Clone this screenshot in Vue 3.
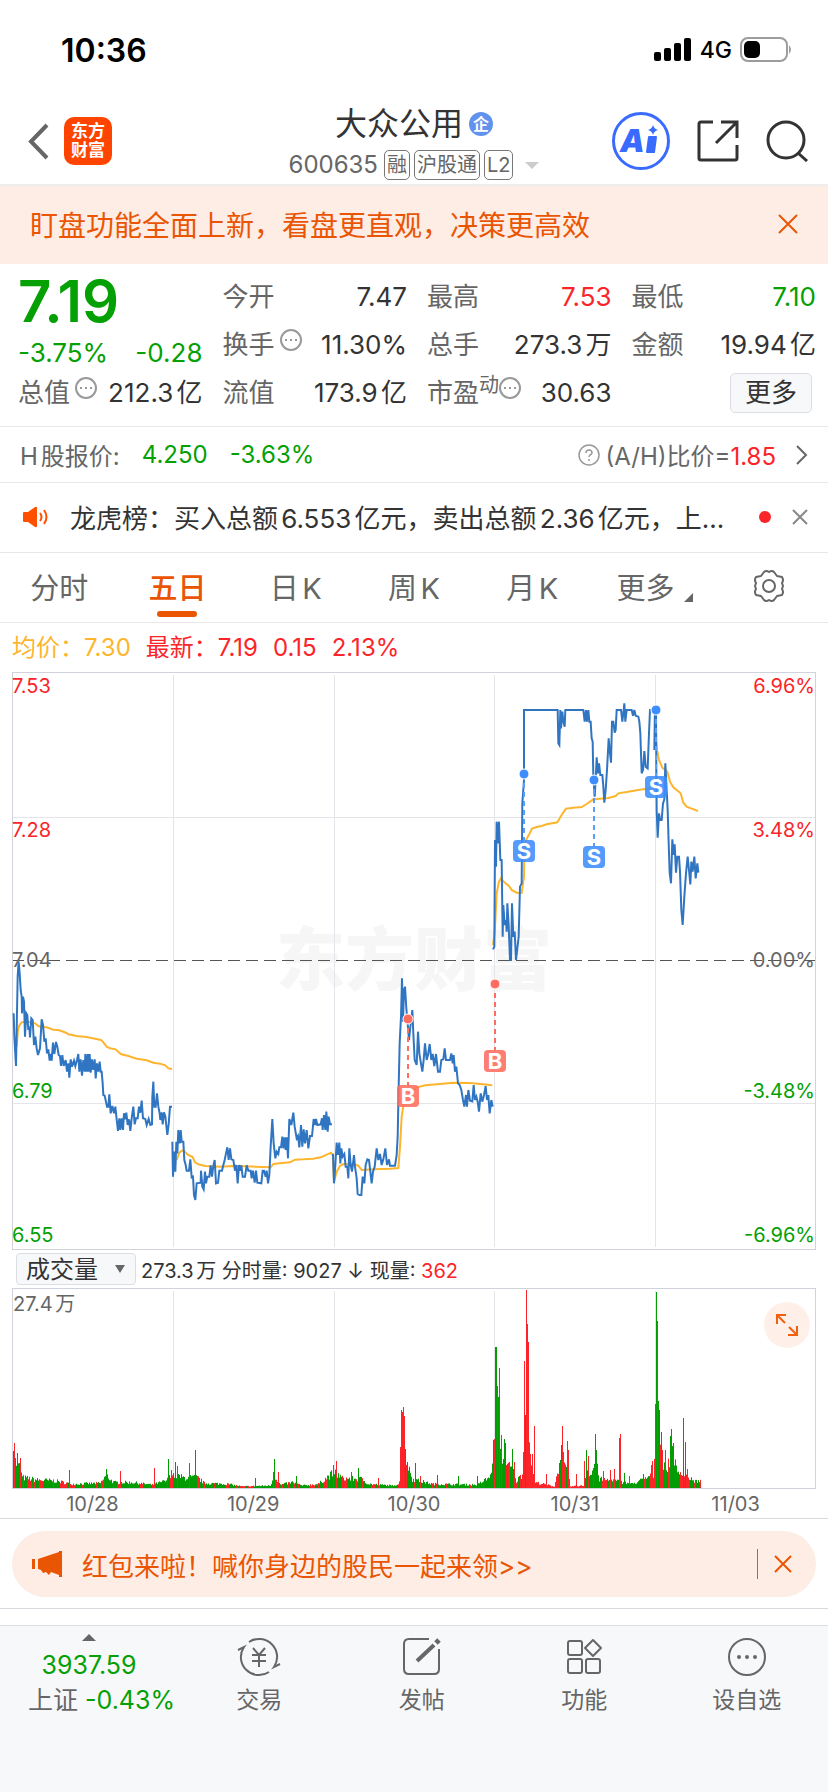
<template>
  <div class="page">
    <div class="status-bar">
      <span class="time">10:36</span>
      <div class="status-icons">
        <svg width="38" height="24" viewBox="0 0 38 24">
          <rect x="0" y="14" width="7" height="9" rx="2" />
          <rect x="10" y="10" width="7" height="13" rx="2" />
          <rect x="20" y="5" width="7" height="18" rx="2" />
          <rect x="30" y="0" width="7" height="23" rx="2" />
        </svg>
        <span class="network">4G</span>
        <svg width="52" height="26" viewBox="0 0 52 26">
          <rect x="1" y="1" width="46" height="23" rx="7" fill="none" stroke="#9c9c9c" stroke-width="2" />
          <rect x="4" y="4" width="16" height="17" rx="5" />
          <path d="M49 8q4 4.500 0 9z" fill="#9c9c9c" />
        </svg>
      </div>
    </div>

    <header class="header">
      <div class="header-left">
        <button class="icon-btn" aria-label="返回">
          <svg width="22" height="38" viewBox="0 0 22 38" fill="none" stroke="#666" stroke-width="4">
            <path d="M19 3 3 19.500 19 36" />
          </svg>
        </button>
        <div class="logo"><span>东方</span><span>财富</span></div>
      </div>
      <div class="header-title">
        <h1>大众公用<span class="corp">企</span></h1>
        <div class="code-row">
          <span class="code">600635</span>
          <span v-for="tag in tags" :key="tag" class="tag">{{ tag }}</span>
          <i class="caret"></i>
        </div>
      </div>
      <div class="header-right">
        <button class="icon-btn" aria-label="Ai">
          <svg width="58" height="58" viewBox="0 0 58 58">
            <circle cx="29" cy="29" r="27.500" fill="none" stroke="#3a6bff" stroke-width="3" />
            <text x="8" y="40" class="ai-text">A</text>
            <path d="M37 25h7l-2 15h-7z" fill="#3a6bff" stroke="#3a6bff" stroke-width="2" stroke-linejoin="round" />
            <path d="M41 13q1 4 5 5-4 1-5 5-1-4-5-5 4-1 5-5z" fill="#3a6bff" />
          </svg>
        </button>
        <button class="icon-btn" aria-label="分享">
          <svg width="42" height="42" viewBox="0 0 42 42" fill="none" stroke="#333" stroke-width="3">
            <path d="M16 2H4Q2 2 2 4V38Q2 40 4 40H38Q40 40 40 38V25M24 2H40V18M40 2 19 23" />
          </svg>
        </button>
        <button class="icon-btn" aria-label="搜索">
          <svg width="42" height="42" viewBox="0 0 42 42" fill="none" stroke="#333" stroke-width="3">
            <circle cx="20" cy="20" r="18" />
            <path d="M32 33 41 41" />
          </svg>
        </button>
      </div>
    </header>

    <div class="banner">
      <span>盯盘功能全面上新，看盘更直观，决策更高效</span>
      <button class="icon-btn" aria-label="关闭">
        <svg width="20" height="20" viewBox="0 0 20 20" stroke="#ea5504" stroke-width="2"><path d="M1 1 19 19M19 1 1 19" /></svg>
      </button>
    </div>

    <section class="quote">
      <div class="quote-col">
        <div class="price">7.19</div>
        <div class="change"><span>-3.75%</span><span>-0.28</span></div>
        <div class="cell">
          <span class="label">总值</span>
          <svg class="dots" viewBox="0 0 22 22"><circle cx="11" cy="11" r="10" /><path d="M5 11h2M10 11h2M15 11h2" /></svg>
          <span class="value">212.3亿</span>
        </div>
      </div>
      <div v-for="(col, c) in quoteCols" :key="c" class="quote-col">
        <div v-for="item in col" :key="item.label" class="cell">
          <span class="label">{{ item.label }}</span>
          <span v-if="item.sup" class="sup">{{ item.sup }}</span>
          <svg v-if="item.info" class="dots" viewBox="0 0 22 22"><circle cx="11" cy="11" r="10" /><path d="M5 11h2M10 11h2M15 11h2" /></svg>
          <span class="value" :class="item.tone">{{ item.value }}</span>
        </div>
        <div v-if="c === 2" class="cell"><button class="more-btn">更多</button></div>
      </div>
    </section>

    <section class="h-share">
      <span class="h-label">H股报价:</span>
      <span class="down">4.250</span>
      <span class="down">-3.63%</span>
      <a href="#" class="ratio">
        <svg width="22" height="22" viewBox="0 0 22 22" fill="none" stroke="#999" stroke-width="1.500">
          <circle cx="11" cy="11" r="10" />
          <path d="M8 9q0-3 3-3t3 3q0 1-2 2-1 1-1 2M11 15v2" />
        </svg>
        <span>(A/H)比价=<b class="up">1.85</b></span>
        <svg class="chevron" width="12" height="20" viewBox="0 0 12 20" fill="none" stroke="#666" stroke-width="2"><path d="M1 1 10 10 1 19" /></svg>
      </a>
    </section>

    <section class="notice">
      <svg width="26" height="22" viewBox="0 0 26 22" fill="none" stroke="#ff5000" stroke-width="2">
        <path d="M1 7Q1 6 2 6H6L13 1Q15 0 15 2V20Q15 22 13 21L6 16H2Q1 16 1 15z" fill="#ff5000" stroke="none" />
        <path d="M18 7q3 4 0 8M22 4q5 7 0 14" />
      </svg>
      <p>龙虎榜：买入总额6.553亿元，卖出总额2.36亿元，上...</p>
      <i class="red-dot"></i>
      <button class="icon-btn" aria-label="关闭">
        <svg width="16" height="16" viewBox="0 0 16 16" stroke="#888" stroke-width="2"><path d="M1 1 15 15M15 1 1 15" /></svg>
      </button>
    </section>

    <nav class="tabs">
      <button
        v-for="tab in tabs"
        :key="tab"
        class="tab"
        :class="{ active: tab === activeTab }"
        @click="activeTab = tab"
      >{{ tab }}<i v-if="tab === '更多'" class="corner"></i></button>
      <button class="tab" aria-label="设置">
        <svg width="34" height="34" viewBox="0 0 34 34" fill="none" stroke="#666" stroke-width="2">
          <path d="M12 3Q14 1 17 3 20 1 22 3L25 7 30 8Q32 11 30 14L31 17 30 20Q32 23 30 26L25 27 22 31Q20 33 17 31 14 33 12 31L9 27 4 26Q2 23 4 20L3 17 4 14Q2 11 4 8L9 7z" stroke-linejoin="round" />
          <circle cx="17" cy="17" r="6" />
        </svg>
      </button>
    </nav>

    <div class="legend">
      <span class="avg">均价：7.30</span>
      <span class="up">最新：7.19</span>
      <span class="up">0.15</span>
      <span class="up">2.13%</span>
    </div>

    <div class="charts">
      <svg class="chart" viewBox="0 0 804 578">
        <text class="watermark" x="402" y="313">东方财富</text>
        <path class="grid" d="M161 3V575M322 3V575M482 3V575M643 3V575M0 145H804M0 431H804" />
        <path class="base" d="M0 288H804" />
        <rect x="0" y="0" width="804" height="578" fill="none" stroke="#d0d3dc" stroke-width="2" />
        <g v-for="(t, i) in axis" :key="i" class="axis" :class="t.tone">
          <text x="0" :y="t.y">{{ t.price }}</text>
          <text x="803" :y="t.y" text-anchor="end">{{ t.pct }}</text>
        </g>
        <g transform="scale(0.333333)" fill="none">
          <g v-for="(s, i) in sessions" :key="i" :transform="`translate(${s.x} ${s.y})`">
            <polyline :points="s.avg" stroke="#fdb52e" stroke-width="6" />
            <polyline :points="s.price" stroke="#3075c2" stroke-width="6" />
          </g>
        </g>
        <g v-for="(m, i) in marks" :key="'m' + i" :class="m.type === 'S' ? 'sell' : 'buy'">
          <path :d="`M${m.x} ${m.y}v66`" stroke-width="2" stroke-dasharray="5 4" />
          <circle :cx="m.x" :cy="m.y" r="5" stroke="#fff" />
          <rect :x="m.x - 11" :y="m.y + 66" width="22" height="22" rx="4" />
          <text :x="m.x" :y="m.y + 85">{{ m.type }}</text>
        </g>
      </svg>

      <div class="volume-bar">
        <div class="select-wrap">
          <select aria-label="指标">
            <option>成交量</option>
            <option>MACD</option>
          </select>
        </div>
        <span>273.3万 分时量: 9027 ↓ 现量: <b class="up">362</b></span>
      </div>

      <div class="volume">
        <svg class="chart" viewBox="0 0 804 201">
          <path class="grid" d="M161 3V200M322 3V200M482 3V200M643 3V200" />
          <rect x="0" y="0" width="804" height="201" fill="none" stroke="#d0d3dc" stroke-width="2" />
          <path :d="volume.r" stroke="#fb2529" />
          <path :d="volume.g" stroke="#049c04" />
          <text x="1" y="23" class="axis flat">27.4万</text>
        </svg>
        <button class="expand" aria-label="全屏">
          <svg width="24" height="24" viewBox="0 0 24 24" fill="none" stroke="#f0600f" stroke-width="2">
            <path d="M2 11V2H11M2 2 10 10M22 13V22H13M22 22 14 14" />
          </svg>
        </button>
      </div>
      <div class="dates"><span v-for="d in dates" :key="d">{{ d }}</span></div>
    </div>

    <div class="promo-wrap">
      <div class="promo">
        <svg width="30" height="26" viewBox="0 0 30 26" fill="#ea5504">
          <path d="M0 8H3V18H0zM6 8 27 1V0H30V26H27V24L19 21 17 24 14 21 11 22 9 19 6 18z" />
        </svg>
        <a href="#">红包来啦！喊你身边的股民一起来领&gt;&gt;</a>
        <button class="icon-btn promo-close" aria-label="关闭">
          <svg width="18" height="18" viewBox="0 0 18 18" stroke="#ea5504" stroke-width="2"><path d="M1 1 17 17M17 1 1 17" /></svg>
        </button>
      </div>
    </div>

    <footer class="bottom">
      <a href="#" class="index">
        <i class="up-caret"></i>
        <span class="down">3937.59</span>
        <span class="index-name">上证 <b class="down">-0.43%</b></span>
      </a>
      <a href="#" class="nav-item">
        <svg width="44" height="40" viewBox="0 0 44 40">
          <path d="M12 5A18 18 0 0 1 37 30L43 27M32 35A18 18 0 0 1 7 10L1 13" />
          <path d="M16 11 22 18 28 11M15 18H29M15 24H29M22 18V30" />
        </svg>
        <span>交易</span>
      </a>
      <a href="#" class="nav-item">
        <svg width="40" height="40" viewBox="0 0 40 40">
          <path d="M27 2H7Q2 2 2 7V32Q2 37 7 37H32Q37 37 37 32V12" />
          <path d="M15 24 32 8" stroke-width="4" />
          <path d="M34 6 37 3" stroke-width="5" />
        </svg>
        <span>发帖</span>
      </a>
      <a href="#" class="nav-item">
        <svg width="40" height="40" viewBox="0 0 40 40">
          <rect x="4" y="4" width="14" height="14" rx="2" />
          <rect x="4" y="22" width="14" height="14" rx="2" />
          <rect x="22" y="22" width="14" height="14" rx="2" />
          <path d="M29 3 37 11 29 19 21 11z" stroke-linejoin="round" />
        </svg>
        <span>功能</span>
      </a>
      <a href="#" class="nav-item">
        <svg width="40" height="40" viewBox="0 0 40 40">
          <circle cx="20" cy="20" r="18" />
          <path d="M12 20h0M20 20h0M28 20h0" stroke-width="4" stroke-linecap="round" />
        </svg>
        <span>设自选</span>
      </a>
    </footer>
  </div>
</template>

<script setup>
import { ref } from 'vue'

const tags = ['融', '沪股通', 'L2']
const tabs = ['分时', '五日', '日K', '周K', '月K', '更多']
const activeTab = ref('五日')
const dates = ['10/28', '10/29', '10/30', '10/31', '11/03']

const quoteCols = [
  [
    { label: '今开', value: '7.47' },
    { label: '换手', value: '11.30%', info: true },
    { label: '流值', value: '173.9亿' },
  ],
  [
    { label: '最高', value: '7.53', tone: 'up' },
    { label: '总手', value: '273.3万' },
    { label: '市盈', sup: '动', value: '30.63', info: true },
  ],
  [
    { label: '最低', value: '7.10', tone: 'down' },
    { label: '金额', value: '19.94亿' },
  ],
]

const axis = [
  { price: '7.53', pct: '6.96%', y: 21, tone: 'high' },
  { price: '7.28', pct: '3.48%', y: 165, tone: 'high' },
  { price: '7.04', pct: '0.00%', y: 295, tone: 'flat' },
  { price: '6.79', pct: '-3.48%', y: 426, tone: 'low' },
  { price: '6.55', pct: '-6.96%', y: 570, tone: 'low' },
]

// one entry per trading day, points are in thirds of a chart unit
const sessions = [
  {
    x: -36, y: 774,
    avg: '50,350 54,300 58,286 65,277 75,275 95,277 105,280 115,288 122,290 140,292 160,299 175,300 200,309 205,313 230,318 260,321 285,326 303,330 310,337 320,350 330,355 347,358 362,372 385,378 410,386 440,391 460,398 480,401 496,406 505,415 516,417',
    price: '41,250 43,320 48,408 50,300 53,140 56,95 59,130 62,180 65,200 66,250 69,200 72,215 75,320 79,250 82,255 85,300 88,290 90,322 94,265 98,270 102,345 106,320 110,355 114,375 120,355 125,268 129,285 133,335 137,325 141,370 145,358 149,392 153,372 155,392 159,338 163,372 168,336 172,350 176,375 180,378 183,408 187,375 191,408 197,390 201,425 205,400 208,443 212,388 216,410 222,392 226,408 231,390 235,372 238,425 242,388 246,437 250,390 254,425 256,372 260,425 263,372 266,425 269,372 272,428 276,388 280,420 284,388 287,445 291,400 295,425 299,395 302,425 305,425 308,460 310,495 314,497 318,515 321,530 325,530 328,493 332,550 337,528 342,550 346,530 350,568 354,603 358,565 361,600 365,565 369,600 372,550 376,568 379,548 383,585 387,568 391,603 395,565 400,530 404,583 408,565 413,565 417,530 421,548 425,512 429,565 436,567 440,585 446,567 451,585 456,583 457,500 460,455 463,530 467,530 471,490 475,530 479,550 481,570 485,547 488,583 492,547 496,560 502,615 506,583 510,530 516,530',
  },
  {
    x: -36, y: 774,
    avg: '530,690 538,668 545,662 552,662 562,673 578,681 585,697 595,703 615,708 660,710 700,708 740,709 790,711 812,712 820,702 840,700 870,697 885,689 910,688 940,686 965,681 980,674 996,667',
    price: '517,635 519,740 523,665 526,725 529,635 532,670 535,600 539,640 542,600 545,635 550,635 553,690 557,705 560,722 567,722 571,688 575,742 579,740 582,795 586,810 590,760 602,758 603,722 607,770 611,778 615,725 618,760 622,740 628,740 632,706 636,740 640,708 644,690 648,760 654,758 658,722 666,722 670,705 674,690 678,670 682,652 686,690 690,655 694,688 700,690 705,722 709,705 713,760 717,705 721,722 724,706 728,740 735,740 740,706 745,722 752,722 755,745 759,722 764,758 768,722 772,758 784,760 788,722 792,722 797,740 800,722 804,760 808,735 812,650 817,567 821,640 826,685 830,665 835,672 838,652 843,652 847,620 850,655 854,622 857,660 860,622 864,685 868,567 874,585 880,548 884,590 890,625 894,618 898,652 903,585 907,650 911,598 915,640 920,600 925,655 930,618 936,618 941,567 945,585 948,567 952,585 962,583 966,565 968,600 972,555 976,600 979,545 983,605 986,560 990,583 996,583',
  },
  {
    x: 954, y: 684,
    avg: '0,760 8,762 12,845 20,815 30,798 40,792 70,793 85,797 95,810 130,808 180,806 205,804 210,740 215,650 222,605 232,590 245,575 262,562 285,556 330,552 370,548 420,549 460,553 487,556',
    price: '9,762 12,850 16,795 20,728 24,765 28,728 31,790 34,745 38,770 43,762 47,800 52,800 55,835 58,745 62,795 66,815 69,790 72,765 75,800 80,835 83,882 88,885 94,885 98,830 103,850 107,795 112,778 117,780 121,815 125,850 129,815 134,800 140,745 145,780 150,762 155,795 160,778 166,745 171,795 177,778 180,797 195,797 200,765 203,710 206,560 209,430 213,350 216,235 219,365 222,270 225,260 229,325 233,370 237,420 240,390 244,355 247,330 250,400 254,480 260,495 264,395 268,460 272,485 277,515 281,480 285,430 290,480 294,465 299,432 304,480 308,462 313,498 318,462 324,515 330,515 334,480 340,478 344,445 348,480 360,480 364,460 368,490 371,465 375,515 379,500 384,550 389,555 394,570 399,600 403,620 408,585 411,620 415,570 420,602 427,604 431,555 435,600 439,590 443,605 447,635 452,580 457,605 462,585 467,558 471,600 475,585 479,640 484,600 488,620',
  },
  {
    x: 1374, y: -6,
    avg: '69,825 74,790 80,670 87,635 93,625 103,637 117,648 125,660 140,668 155,669 162,620 163,540 168,510 178,492 186,476 200,471 215,468 230,463 262,457 270,443 278,430 288,416 310,413 335,411 350,402 370,388 390,386 415,384 437,378 445,370 470,366 500,361 520,358 545,356',
    price: '69,838 73,830 75,510 78,590 80,455 83,520 87,455 91,570 95,570 98,800 100,705 104,765 108,750 110,785 112,700 116,765 120,870 123,870 126,700 130,800 134,785 138,870 142,835 146,800 150,650 155,640 157,400 162,330 162,120 263,120 265,220 268,225 271,120 273,175 277,125 280,155 284,170 286,120 340,120 344,155 348,120 351,155 355,120 358,155 362,155 365,205 368,215 370,320 374,380 377,330 380,262 384,310 387,280 391,315 397,315 400,350 403,398 407,360 411,300 416,205 419,240 423,278 426,155 430,155 434,188 437,180 440,120 453,120 457,155 460,130 463,100 466,155 470,120 485,120 489,137 493,120 497,137 505,140 508,155 511,190 515,310 519,300 523,243 527,290 533,295 537,190 540,120 543,120',
  },
  {
    x: 1374, y: -6,
    avg: '556,180 561,240 567,270 577,293 592,305 600,335 610,352 632,370 640,398 650,410 665,416 684,423',
    price: '553,240 555,110 558,110 559,300 560,420 563,503 567,430 570,450 575,450 579,400 583,388 586,280 589,340 593,420 596,520 599,608 603,640 607,508 611,555 614,523 618,608 622,560 627,560 630,605 634,720 638,765 643,680 648,610 653,560 657,600 661,643 664,575 668,605 673,560 677,625 682,580 685,608',
  },
]

const marks = [
  { type: 'B', x: 396, y: 347 },
  { type: 'B', x: 483, y: 312 },
  { type: 'S', x: 512, y: 102 },
  { type: 'S', x: 582, y: 108 },
  { type: 'S', x: 644, y: 38 },
]

// typical volume level along the axis, and the bars that stand out of it
const levels = [
  [1, 36], [7, 26], [10, 13], [25, 10], [42, 9], [60, 5], [88, 6], [94, 16], [101, 7], [120, 7], [140, 4], [154, 9],
  [160, 17], [170, 13], [185, 13], [192, 6], [215, 5], [230, 2], [258, 3], [262, 16], [268, 4], [280, 7], [290, 3], [306, 5],
  [322, 20], [330, 12], [350, 11], [356, 5], [380, 3], [386, 5], [394, 36], [400, 11], [420, 5], [465, 4], [478, 14], [483, 70],
  [490, 40], [496, 25], [502, 22], [504, 8], [510, 18], [514, 80], [519, 34], [523, 7], [542, 2], [547, 30], [555, 22],
  [558, 2], [571, 3], [575, 22], [579, 16], [583, 36], [587, 11], [602, 9], [620, 5], [633, 12], [641, 16], [644, 110],
  [649, 45], [652, 27], [656, 28], [660, 45], [665, 17], [670, 22], [674, 17], [680, 9], [688, 8],
]
const peaks = [
  [2, 45, 'r'], [1, 37, 'g'], [5, 35, 'g'], [8, 30, 'r'], [57, 18, 'r'], [94, 19, 'g'], [108, 17, 'r'], [142, 20, 'r'],
  [156, 29, 'g'], [159, 18, 'r'], [163, 26, 'g'], [165, 22, 'r'], [177, 25, 'r'], [183, 38, 'g'], [243, 10, 'g'], [261, 16, 'r'],
  [262, 29, 'g'], [266, 16, 'r'], [284, 12, 'g'], [321, 23, 'r'], [324, 27, 'r'], [339, 16, 'r'], [346, 20, 'g'], [366, 10, 'r'],
  [388, 41, 'r'], [389, 78, 'r'], [390, 76, 'r'], [391, 81, 'r'], [392, 72, 'r'], [393, 39, 'g'], [395, 26, 'g'], [403, 25, 'g'],
  [408, 12, 'r'], [425, 13, 'g'], [446, 12, 'g'], [465, 12, 'g'], [482, 49, 'r'], [483, 141, 'g'], [484, 141, 'g'], [485, 102, 'r'],
  [486, 91, 'g'], [487, 120, 'r'], [488, 39, 'g'], [489, 53, 'r'], [492, 49, 'g'], [493, 45, 'g'], [497, 26, 'r'], [500, 39, 'g'],
  [502, 26, 'r'], [511, 36, 'r'], [512, 127, 'r'], [513, 73, 'g'], [514, 198, 'r'], [515, 164, 'r'], [516, 146, 'r'],
  [518, 34, 'r'], [520, 34, 'r'], [522, 62, 'r'], [534, 14, 'r'], [549, 43, 'g'], [550, 62, 'r'], [551, 36, 'r'], [555, 47, 'r'],
  [556, 38, 'r'], [564, 14, 'r'], [572, 27, 'r'], [574, 38, 'g'], [576, 32, 'r'], [583, 54, 'g'], [584, 38, 'g'], [591, 17, 'r'],
  [598, 18, 'r'], [602, 19, 'r'], [607, 50, 'r'], [608, 54, 'r'], [612, 15, 'g'], [617, 12, 'r'], [631, 14, 'g'], [639, 23, 'r'],
  [640, 27, 'r'], [643, 84, 'r'], [644, 196, 'g'], [645, 167, 'r'], [646, 87, 'g'], [647, 78, 'g'], [649, 56, 'g'], [650, 38, 'r'],
  [653, 38, 'r'], [658, 52, 'g'], [659, 59, 'g'], [661, 45, 'g'], [671, 70, 'g'], [673, 46, 'g'], [675, 19, 'r'],
]

function levelAt(x) {
  const i = levels.findIndex((p) => p[0] >= x)
  if (i <= 0) return levels[0][1]
  const [x0, h0] = levels[i - 1]
  const [x1, h1] = levels[i]
  return h0 + ((h1 - h0) * (x - x0)) / (x1 - x0)
}

function buildVolume() {
  const paths = { r: '', g: '' }
  const special = Object.fromEntries(peaks.map(([x, h, c]) => [x, { h, c }]))
  let seed = 7
  const rand = () => {
    seed = (seed * 16807) % 2147483647
    return seed / 2147483647
  }
  let color = 'g'
  for (let x = 1; x <= 688; x++) {
    const a = rand()
    const b = rand()
    const redZone = (x > 509 && x < 547) || (x > 556 && x < 573) || (x > 385 && x < 393)
    // colours come in short runs, mostly green
    if (color === 'g' ? b > 0.8 : b > 0.45) color = color === 'g' ? 'r' : 'g'
    const bar = special[x] || { h: Math.max(1, levelAt(x) * (0.55 + 0.5 * a)), c: redZone ? 'r' : color }
    paths[bar.c] += `M${x}.5 200v-${bar.h.toFixed(1)}`
  }
  return paths
}

const volume = buildVolume()
</script>

<style>
body {
  background: #fff;
}
</style>

<style scoped>
.page {
  display: flex;
  flex-direction: column;
  min-height: 100vh;
  font-family: Inter, "Noto Sans CJK SC", sans-serif;
  font-size: 26px;
  color: #333;
  text-autospace: normal;
}

button,
select {
  font-family: inherit;
  border: 0;
  background: none;
  padding: 0;
  color: inherit;
}

a {
  color: inherit;
  text-decoration: none;
}

b {
  font-weight: 400;
}

svg {
  display: block;
  flex: none;
}

.icon-btn {
  display: block;
}

.up {
  color: #fb2529;
}

.down {
  color: #04a004;
}

.status-bar {
  display: flex;
  justify-content: space-between;
  align-items: center;
  height: 100px;
  padding: 0 36px 0 61px;
  color: #000;
}

.time {
  font-size: 32px;
  font-weight: 600;
}

.status-icons {
  display: flex;
  align-items: center;
  gap: 8px;
}

.network {
  font-size: 23px;
  font-weight: 500;
}

.header {
  display: grid;
  grid-template-columns: 1fr auto 1fr;
  align-items: center;
  height: 84px;
  padding: 0 20px;
  border-bottom: 2px solid #eee;
}

.header-left {
  display: flex;
  align-items: center;
  gap: 14px;
  padding: 0 0 4px 8px;
}

.logo {
  display: flex;
  flex-direction: column;
  align-items: center;
  justify-content: center;
  width: 48px;
  height: 48px;
  border-radius: 10px;
  background: #ff4400;
  color: #fff;
  font-size: 17px;
  font-weight: 700;
  line-height: 19px;
}

.header-title {
  display: flex;
  flex-direction: column;
  align-items: center;
  padding-top: 3px;
}

h1 {
  display: flex;
  align-items: center;
  gap: 6px;
  margin: 0;
  font-size: 32px;
  font-weight: 400;
  line-height: 42px;
}

.corp {
  width: 24px;
  border-radius: 50%;
  background: #6193ee;
  color: #fff;
  font-size: 16px;
  font-weight: 700;
  line-height: 24px;
  text-align: center;
}

.code-row {
  display: flex;
  align-items: center;
  gap: 4px;
  color: #666;
  font-size: 24px;
  line-height: 40px;
}

.code {
  margin-right: 2px;
}

.tag {
  padding: 0 2px;
  border: 1px solid #777;
  border-radius: 5px;
  font-size: 20px;
  line-height: 28px;
}

.caret {
  margin-left: 8px;
  border: 7px solid transparent;
  border-top-color: #ccc;
  border-bottom: 0;
}

.header-right {
  display: flex;
  align-items: center;
  justify-content: flex-end;
  gap: 27px;
  padding-bottom: 4px;
}

.ai-text {
  font-size: 31px;
  font-weight: 900;
  font-style: italic;
  fill: #3a6bff;
}

.banner {
  display: flex;
  align-items: center;
  justify-content: space-between;
  height: 75px;
  padding: 0 30px 3px;
  background: #fdede4;
  color: #ea5504;
  font-size: 28px;
}

.quote {
  display: grid;
  grid-template-columns: repeat(4, 1fr);
  gap: 20px;
  padding: 9px 12px 9px 18px;
  border-bottom: 1px solid #e8e8e8;
}

.price {
  height: 56px;
  color: #04a004;
  font-size: 58px;
  font-weight: 600;
  line-height: 56px;
}

.change {
  display: flex;
  align-items: flex-end;
  justify-content: space-between;
  height: 40px;
  color: #04a004;
  line-height: 32px;
}

.cell {
  display: flex;
  align-items: center;
  height: 48px;
  line-height: 48px;
}

.label {
  color: #666;
}

.value {
  margin-left: auto;
}

.sup {
  align-self: flex-start;
  color: #666;
  font-size: 20px;
  line-height: 32px;
}

.dots {
  align-self: flex-start;
  width: 22px;
  height: 22px;
  margin: 8px 0 0 5px;
  fill: none;
  stroke: #999;
  stroke-width: 2;
}

.sup + .dots {
  margin-left: 0;
}

.more-btn {
  width: 82px;
  height: 40px;
  margin: 0 4px 0 auto;
  border: 1px solid #dcdee4;
  border-radius: 5px;
  background: #f7f8fa;
  font-size: 26px;
  line-height: 36px;
}

.h-share {
  display: flex;
  align-items: center;
  gap: 22px;
  height: 55px;
  padding: 0 20px;
  border-bottom: 1px solid #e8e8e8;
  font-size: 24px;
}

.h-label,
.ratio {
  color: #666;
}

.ratio {
  display: flex;
  align-items: center;
  gap: 6px;
  margin-left: auto;
}

.chevron {
  margin-left: 14px;
}

.notice {
  display: flex;
  align-items: center;
  height: 67px;
  padding: 0 20px 2px 22px;
  border-bottom: 1px solid #e8e8e8;
}

.notice p {
  flex: 1;
  margin: 0 0 0 22px;
  white-space: nowrap;
}

.red-dot {
  width: 12px;
  height: 12px;
  margin-right: 21px;
  border-radius: 50%;
  background: #fb2529;
}

.tabs {
  display: flex;
  height: 69px;
  border-bottom: 1px solid #e8e8e8;
}

.tab {
  position: relative;
  display: flex;
  flex: 1;
  align-items: center;
  justify-content: center;
  padding-bottom: 3px;
  color: #666;
  font-size: 29px;
}

.tab.active {
  color: #ea5504;
  font-weight: 500;
}

.tab.active::after {
  content: "";
  position: absolute;
  bottom: 5px;
  width: 40px;
  height: 6px;
  border-radius: 3px;
  background: #ea5504;
}

.corner {
  margin: 22px -8px 0 9px;
  border-left: 9px solid transparent;
  border-bottom: 9px solid #666;
}

.legend {
  display: flex;
  gap: 15px;
  padding: 0 12px;
  font-size: 24px;
  line-height: 49px;
}

.avg {
  color: #fdb52e;
}

.charts {
  padding: 0 12px;
}

.chart {
  width: 100%;
  height: auto;
}

.grid {
  stroke: #e4e5ea;
  shape-rendering: crispEdges;
}

.base {
  stroke: #555;
  stroke-dasharray: 12 6;
  shape-rendering: crispEdges;
}

.watermark {
  fill: #f6f6f6;
  font-size: 69px;
  font-weight: 900;
  text-anchor: middle;
}

.axis {
  font-size: 20px;
}

.high {
  fill: #fb2529;
}

.flat {
  fill: #666;
}

.low {
  fill: #04a004;
}

.sell {
  fill: #3e8dfd;
  stroke: #5b9dfb;
}

.buy {
  fill: #fe6d5f;
  stroke: #fe6d5f;
}

.sell rect,
.buy rect {
  stroke: none;
  opacity: 0.88;
}

.sell text,
.buy text {
  fill: #fff;
  stroke: none;
  font-size: 22px;
  font-weight: 700;
  text-anchor: middle;
}

.volume-bar {
  display: flex;
  align-items: center;
  gap: 5px;
  height: 38px;
  padding-left: 4px;
  font-size: 20px;
}

.select-wrap {
  position: relative;
  width: 120px;
}

.select-wrap select {
  width: 100%;
  height: 32px;
  padding-left: 9px;
  appearance: none;
  border: 1px solid #dcdee4;
  border-radius: 4px;
  background: #f7f8fa;
  font-size: 24px;
}

.select-wrap::after {
  content: "";
  position: absolute;
  top: 12px;
  right: 11px;
  border: 5px solid transparent;
  border-top: 8px solid #666;
  border-bottom: 0;
}

.volume {
  position: relative;
}

.expand {
  position: absolute;
  top: 14px;
  right: 6px;
  display: flex;
  align-items: center;
  justify-content: center;
  width: 46px;
  height: 46px;
  border-radius: 50%;
  background: #fef0e9;
}

.dates {
  display: flex;
  height: 29px;
  color: #666;
  font-size: 20px;
  line-height: 31px;
  text-align: center;
}

.dates span {
  flex: 1;
}

.promo-wrap {
  padding: 12px 12px 11px;
  border: solid #d8d9de;
  border-width: 1px 0;
}

.promo {
  display: flex;
  align-items: center;
  gap: 20px;
  height: 66px;
  padding: 0 24px 0 20px;
  border-radius: 33px;
  background: #fdede4;
  color: #ea5504;
}

.promo-close {
  margin-left: auto;
  padding: 6px 0 6px 16px;
  border-left: 1px solid #ea5504;
}

.bottom {
  display: flex;
  flex: 1;
  margin-top: 16px;
  border-top: 1px solid #dcdde0;
  background: #f7f8fa;
  color: #666;
}

.index {
  display: flex;
  flex-direction: column;
  align-items: center;
  width: 178px;
  padding-top: 8px;
  font-size: 25px;
  line-height: 35px;
}

.index-name {
  align-self: flex-end;
  margin-right: 3px;
}

.up-caret {
  margin-bottom: 7px;
  border: 7px solid transparent;
  border-top: 0;
  border-bottom-color: #666;
}

.nav-item {
  display: flex;
  flex: 1;
  flex-direction: column;
  align-items: center;
  gap: 6px;
  padding-top: 11px;
  font-size: 23px;
  line-height: 34px;
}

.nav-item svg {
  fill: none;
  stroke: #666;
  stroke-width: 2;
}
</style>
